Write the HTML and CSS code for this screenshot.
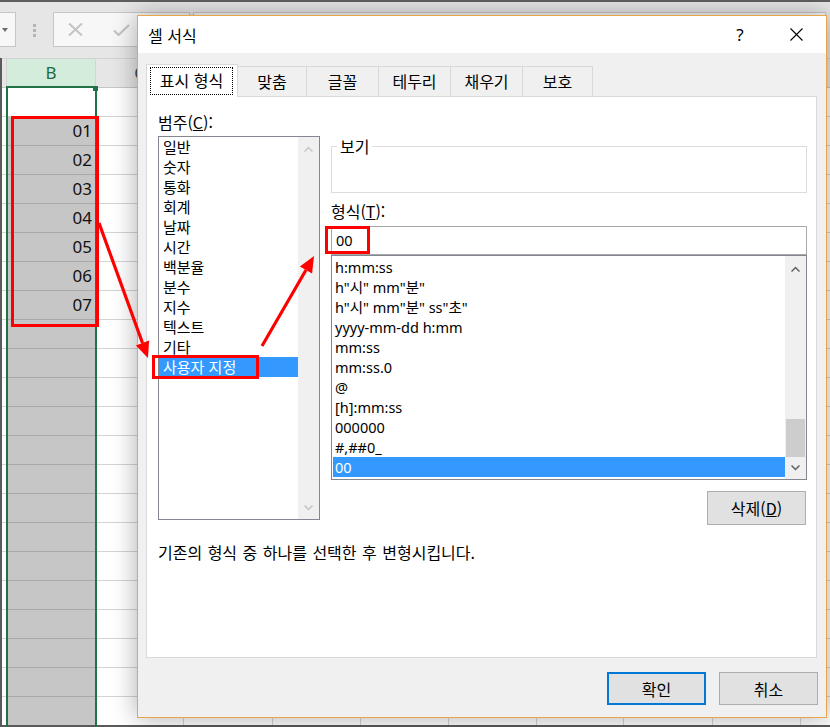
FILE: index.html
```html
<!DOCTYPE html>
<html lang="ko">
<head>
<meta charset="utf-8">
<title>셀 서식</title>
<link rel="stylesheet" href="styles.css">
</head>
<body>
<div class="app">
  <div class="topbar">
    <div class="namebox">
      <svg width="6" height="4" viewBox="0 0 6 4"><path d="M0 0H6L3 4Z" fill="#6d6d6d"/></svg>
    </div>
    <div class="grip">
      <svg width="4" height="13" viewBox="0 0 4 13"><rect x="0" y="0" width="3" height="3" fill="#b4b4b4"/><rect x="0" y="5" width="3" height="3" fill="#b4b4b4"/><rect x="0" y="10" width="3" height="3" fill="#b4b4b4"/></svg>
    </div>
    <div class="fxbox">
      <svg class="ic-x" width="15" height="13" viewBox="0 0 15 13"><path d="M1 0.5L14 12.5M14 0.5L1 12.5" stroke="#c3c3c3" stroke-width="2" fill="none"/></svg>
      <svg class="ic-ok" width="17" height="12" viewBox="0 0 17 12"><path d="M1 6.5L5.5 11L16 1" stroke="#c3c3c3" stroke-width="2.2" fill="none"/></svg>
    </div>
    <div class="formula"></div>
  </div>

  <div class="sheet">
    <div class="col col-a"><div class="hdr"></div><div class="cells"></div></div>
    <div class="col col-b">
      <div class="hdr">B</div>
      <div class="cells">
        <div class="cell active"></div>
        <div class="cell">01</div>
        <div class="cell">02</div>
        <div class="cell">03</div>
        <div class="cell">04</div>
        <div class="cell">05</div>
        <div class="cell">06</div>
        <div class="cell">07</div>
      </div>
    </div>
    <div class="col w88"><div class="hdr">C</div><div class="cells"></div></div>
    <div class="col w89"><div class="hdr"></div><div class="cells"></div></div>
    <div class="col w88"><div class="hdr"></div><div class="cells"></div></div>
    <div class="col w88"><div class="hdr"></div><div class="cells"></div></div>
    <div class="col w88"><div class="hdr"></div><div class="cells"></div></div>
    <div class="col w87"><div class="hdr"></div><div class="cells"></div></div>
    <div class="col w89"><div class="hdr"></div><div class="cells"></div></div>
    <div class="col w88"><div class="hdr"></div><div class="cells"></div></div>
    <div class="col col-last"><div class="hdr"></div><div class="cells"></div></div>
  </div>
  <div class="bottomline"></div>

  <div class="selframe"></div>
  <div class="selhandle"></div>

  <div class="dialog">
    <div class="titlebar">
      <span class="title">셀 서식</span>
      <span class="help">?</span>
      <svg class="close" width="13" height="13" viewBox="0 0 13 13"><path d="M0.5 0.5L12.5 12.5M12.5 0.5L0.5 12.5" stroke="#000" stroke-width="1.1" fill="none"/></svg>
    </div>
    <div class="dbody">
      <div class="tabs">
        <div class="tab active"><span class="focus">표시 형식</span></div>
        <div class="tab t69">맞춤</div>
        <div class="tab t72">글꼴</div>
        <div class="tab t72">테두리</div>
        <div class="tab t72">채우기</div>
        <div class="tab t70">보호</div>
      </div>
      <div class="panel">
        <div class="cols">
          <div class="catcol">
            <div class="label">범주(<u>C</u>):</div>
            <div class="listbox cat">
              <ul class="items">
                <li>일반</li>
                <li>숫자</li>
                <li>통화</li>
                <li>회계</li>
                <li>날짜</li>
                <li>시간</li>
                <li>백분율</li>
                <li>분수</li>
                <li>지수</li>
                <li>텍스트</li>
                <li>기타</li>
                <li class="sel">사용자 지정</li>
              </ul>
              <div class="vscroll">
                <div class="sbtn up-c"><svg width="9" height="6" viewBox="0 0 9 6"><path d="M0.5 5.5L4.5 1.5L8.5 5.5" fill="none" stroke="#c5c5c5" stroke-width="1.5"/></svg></div>
                <div class="track"></div>
                <div class="sbtn down-c"><svg width="9" height="6" viewBox="0 0 9 6"><path d="M0.5 0.5L4.5 4.5L8.5 0.5" fill="none" stroke="#c5c5c5" stroke-width="1.5"/></svg></div>
              </div>
            </div>
          </div>
          <div class="fmtcol">
            <div class="preview"><span class="legend">보기</span></div>
            <div class="label lbl-fmt">형식(<u>T</u>):</div>
            <div class="textbox">00</div>
            <div class="listbox fmt">
              <ul class="items">
                <li>h:mm:ss</li>
                <li>h"시" mm"분"</li>
                <li>h"시" mm"분" ss"초"</li>
                <li>yyyy-mm-dd h:mm</li>
                <li>mm:ss</li>
                <li>mm:ss.0</li>
                <li>@</li>
                <li>[h]:mm:ss</li>
                <li>000000</li>
                <li>#,##0_</li>
                <li class="sel">00</li>
              </ul>
              <div class="vscroll">
                <div class="sbtn up-f"><svg width="9" height="6" viewBox="0 0 9 6"><path d="M0.5 5.5L4.5 1.5L8.5 5.5" fill="none" stroke="#606060" stroke-width="1.5"/></svg></div>
                <div class="track"><div class="thumb"></div></div>
                <div class="sbtn down-f"><svg width="9" height="6" viewBox="0 0 9 6"><path d="M0.5 0.5L4.5 4.5L8.5 0.5" fill="none" stroke="#606060" stroke-width="1.5"/></svg></div>
              </div>
            </div>
            <div class="btnrow"><button class="btn">삭제(<u>D</u>)</button></div>
          </div>
        </div>
        <p class="desc">기존의 형식 중 하나를 선택한 후 변형시킵니다.</p>
      </div>
      <div class="footer">
        <button class="btn primary">확인</button>
        <button class="btn">취소</button>
      </div>
    </div>
  </div>

  <div class="mark m-nums"></div>
  <div class="mark m-custom"></div>
  <div class="mark m-input"></div>
  <svg class="arrows" width="830" height="727" viewBox="0 0 830 727">
    <line x1="99" y1="223" x2="142.5" y2="343" stroke="#ff0000" stroke-width="3.2"/>
    <polygon points="148,358 135.9,345.4 149.1,340.6" fill="#ff0000"/>
    <line x1="262" y1="346" x2="306" y2="270" stroke="#ff0000" stroke-width="3.2"/>
    <polygon points="314,256 312.1,273.4 299.9,266.4" fill="#ff0000"/>
  </svg>
</div>
</body>
</html>
```

FILE: styles.css
```css
* { box-sizing: border-box; margin: 0; padding: 0; }
html, body { width: 830px; height: 727px; overflow: hidden; background: #fff; }
body { font-family: "Noto Sans CJK KR", "Noto Sans", sans-serif; color: #000; }

.app {
  position: relative;
  width: 830px;
  height: 727px;
  overflow: hidden;
  display: flex;
  flex-direction: column;
  background: #fff;
}

/* ---------- Excel top bar ---------- */
.topbar {
  height: 58px;
  flex: none;
  background: #e6e6e6;
  border-top: 2px solid #5f5f5f;
  padding-top: 10px;
  display: flex;
  align-items: flex-start;
}
.namebox {
  width: 16px;
  height: 35px;
  background: #f7f7f7;
  border: 1px solid #c6c6c6;
  border-left: none;
  display: flex;
  align-items: center;
  padding-left: 2px;
}
.grip {
  width: 37px;
  height: 35px;
  display: flex;
  align-items: center;
  justify-content: center;
  padding-top: 2px;
}
.fxbox {
  width: 137px;
  height: 35px;
  background: #f7f7f7;
  border: 1px solid #c6c6c6;
  display: flex;
  align-items: center;
  padding-left: 14px;
}
.ic-ok { margin-left: 30px; }
.formula {
  flex: 1;
  height: 35px;
  margin-left: 3px;
  margin-right: 4px;
  background: #f7f7f7;
  border: 1px solid #c6c6c6;
}

/* ---------- sheet ---------- */
.sheet {
  flex: 1;
  display: flex;
  border-left: 2px solid #5a5a5a;
  overflow: hidden;
}
.col {
  flex: none;
  display: flex;
  flex-direction: column;
  border-right: 1px solid #d4d4d4;
}
.hdr {
  height: 30px;
  flex: none;
  background: #e6e6e6;
  border-top: 1px solid #d2d2d2;
  border-bottom: 1px solid #c6c6c6;
  font-family: "Noto Sans", sans-serif;
  font-size: 17px;
  line-height: 27px;
  text-align: center;
  color: #444;
}
.cells {
  flex: 1;
  background: repeating-linear-gradient(to bottom, #fff 0 28px, #d4d4d4 28px 29px);
}
.col-a { width: 5px; }
.col-b { width: 89px; }
.w87 { width: 87px; }
.w88 { width: 88px; }
.w89 { width: 89px; }
.col-last { flex: 1; border-right: none; }

.col-b .hdr {
  background: #d3ecdc;
  color: #1e6b41;
}
.col-b .cells {
  background: repeating-linear-gradient(to bottom, #c6c6c6 0 28px, #a9a9a9 28px 29px);
}
.cell {
  height: 29px;
  border-bottom: 1px solid #a9a9a9;
  font-family: "Noto Sans", sans-serif;
  font-size: 17px;
  line-height: 28px;
  text-align: right;
  padding-right: 3px;
  color: #111;
}
.cell.active {
  background: #fff;
  border-bottom-color: #d4d4d4;
}
.bottomline {
  height: 2px;
  flex: none;
  background: #5a5a5a;
}
.selframe {
  position: absolute;
  left: 6px;
  top: 86px;
  width: 91px;
  height: 660px;
  border: 2px solid #217346;
}
.selhandle {
  position: absolute;
  left: 93px;
  top: 86px;
  width: 5px;
  height: 5px;
  background: #217346;
}

/* ---------- dialog ---------- */
.dialog {
  position: absolute;
  left: 137px;
  top: 15px;
  width: 690px;
  height: 703px;
  border: 1px solid #e8a549;
  background: #f0f0f0;
  box-shadow: 0 0 24px rgba(0, 0, 0, 0.33);
  display: flex;
  flex-direction: column;
  font-size: 16px;
}
.titlebar {
  height: 37px;
  flex: none;
  background: #fff;
  display: flex;
  align-items: center;
  padding-left: 10px;
  padding-right: 23px;
}
.title { flex: 1; font-size: 16px; }
.help {
  width: 10px;
  text-align: center;
  font-size: 17px;
  font-family: "Noto Sans", sans-serif;
}
.close { margin-left: 45px; }

.dbody {
  flex: 1;
  padding: 11px 9px 0 8px;
  display: flex;
  flex-direction: column;
}
.tabs {
  display: flex;
  align-items: flex-start;
  height: 33px;
  margin-bottom: -1px;
  position: relative;
  z-index: 1;
}
.tab {
  height: 30px;
  margin-top: 2px;
  background: #f0f0f0;
  border-top: 1px solid #d9d9d9;
  border-right: 1px solid #d9d9d9;
  text-align: center;
  line-height: 28px;
  font-size: 16px;
  white-space: nowrap;
  overflow: hidden;
}
.tab.active {
  width: 92px;
  height: 33px;
  margin-top: 0;
  background: #fff;
  border-left: 1px solid #d9d9d9;
  padding: 2px 4px 1px 3px;
}
.focus {
  display: block;
  height: 28px;
  border: 1px dotted #000;
  line-height: 25px;
}
.t69 { width: 69px; }
.t70 { width: 70px; }
.t72 { width: 72px; }

.panel {
  height: 562px;
  flex: none;
  background: #fff;
  border: 1px solid #d9d9d9;
  padding: 15px 9px 0 11px;
}
.cols {
  display: flex;
  gap: 11px;
  align-items: flex-start;
}
.catcol { width: 162px; flex: none; }
.fmtcol { width: 476px; flex: none; }
.label {
  height: 20px;
  line-height: 20px;
  font-size: 16px;
  white-space: nowrap;
}
.listbox {
  border: 1px solid #828790;
  background: #fff;
  display: flex;
}
.items {
  list-style: none;
  flex: 1;
  min-width: 0;
}
.items li {
  height: 20px;
  line-height: 20px;
  font-size: 15px;
  white-space: nowrap;
}
.items li.sel { background: #3399ff; color: #fff; }

.cat { margin-top: 4px; height: 384px; }
.cat .items li { padding-left: 4px; }

.vscroll {
  width: 21px;
  flex: none;
  background: #f0f0f0;
  display: flex;
  flex-direction: column;
}
.sbtn {
  flex: none;
  display: flex;
  align-items: center;
  justify-content: center;
}
.track {
  flex: 1;
  display: flex;
  flex-direction: column;
  justify-content: flex-end;
}
.up-c { height: 24px; }
.down-c { height: 23px; }
.up-f { height: 26px; }
.down-f { height: 22px; }
.thumb {
  height: 38px;
  background: #cdcdcd;
  margin: 0 1px;
}

.preview {
  margin-top: 34px;
  height: 47px;
  border: 1px solid #dcdcdc;
}
.legend {
  display: block;
  width: fit-content;
  margin: -11px 0 0 5px;
  padding: 0 3px;
  background: #fff;
  line-height: 20px;
  font-size: 16px;
}
.lbl-fmt { margin-top: 8px; }
.textbox {
  margin-top: 5px;
  height: 29px;
  border: 1px solid #a8a8a8;
  padding-left: 4px;
  line-height: 27px;
  font-family: "Noto Sans", "Noto Sans CJK KR", sans-serif;
  font-size: 14.5px;
}
.fmt { height: 225px; padding-left: 1px; }
.fmt .items { padding-top: 1px; }
.fmt .items li {
  padding-left: 2px;
  font-family: "Noto Sans", "Noto Sans CJK KR", sans-serif;
  font-size: 14.5px;
}

.btnrow {
  display: flex;
  justify-content: flex-end;
  margin-top: 11px;
  padding-right: 1px;
}
.btn {
  width: 99px;
  height: 34px;
  background: #e1e1e1;
  border: 1px solid #adadad;
  font-family: "Noto Sans CJK KR", "Noto Sans", sans-serif;
  font-size: 16px;
  color: #000;
}
.desc {
  margin-top: 17px;
  line-height: 20px;
  font-size: 16px;
  word-spacing: 1px;
  white-space: nowrap;
}
.footer {
  display: flex;
  justify-content: flex-end;
  gap: 13px;
  margin-top: 14px;
  margin-right: -1px;
}
.footer .btn { height: 33px; }
.btn.primary { border: 2px solid #0078d7; }

/* ---------- annotations ---------- */
.mark {
  position: absolute;
  border: 3px solid #ff0000;
}
.m-nums { left: 11px; top: 116px; width: 88px; height: 211px; }
.m-custom { left: 152px; top: 355px; width: 107px; height: 24px; }
.m-input { left: 325px; top: 226px; width: 45px; height: 28px; }
.arrows {
  position: absolute;
  left: 0;
  top: 0;
  pointer-events: none;
}
```
